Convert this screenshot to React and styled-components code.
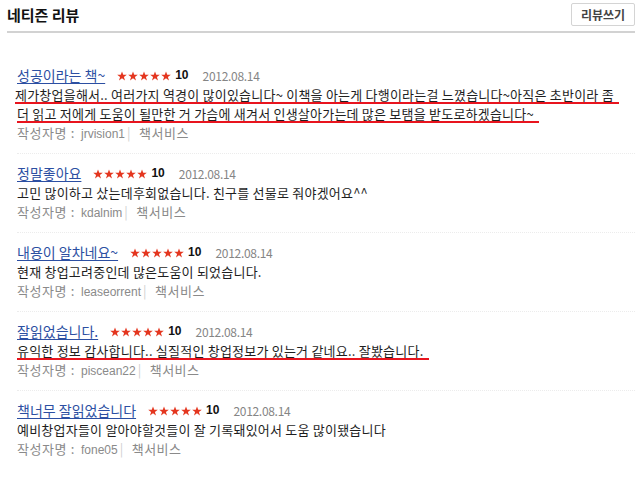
import React from 'react'
import styled, { createGlobalStyle } from 'styled-components'

const GlobalStyle = createGlobalStyle`
  html, body {
    margin: 0;
    padding: 0;
    background: #fff;
  }
  body {
    font-family: "Noto Sans CJK KR", "Noto Sans", sans-serif;
    color: #222;
  }
`

const Page = styled.div`
  width: 640px;
  height: 480px;
  overflow: hidden;
  box-sizing: border-box;
  padding: 0 5px 0 7px;
`

const Header = styled.div`
  display: flex;
  align-items: center;
  justify-content: space-between;
  height: 29px;
  padding-bottom: 2px;
  border-bottom: 2px solid #d2d2d2;
`

const Title = styled.h2`
  margin: 0;
  font-size: 15px;
  font-weight: 700;
  color: #111;
`

const WriteButton = styled.button`
  height: 23px;
  width: 64px;
  padding: 0;
  border: 1px solid #d4d4d4;
  border-radius: 2px;
  background: #fff;
  font-family: inherit;
  font-size: 12px;
  font-weight: 700;
  color: #444;
  cursor: pointer;
`

const List = styled.ul`
  list-style: none;
  margin: 0;
  padding: 23px 0 0 10px;
`

const Review = styled.li`
  padding: 10px 0 11px;
  & + & {
    border-top: 1px dotted #ececec;
  }
`

const Line = styled.div`
  height: 19px;
  line-height: 19px;
  font-size: 13px;
  white-space: nowrap;
`

const Head = styled(Line)`
  display: flex;
  align-items: center;
`

const ReviewTitle = styled.a`
  font-size: 14px;
  color: #2c4fa2;
  text-decoration: underline;
  text-underline-offset: 2px;
  margin-right: 12px;
`

const Stars = styled.span`
  display: inline-flex;
  gap: 1px;
  margin-right: 4px;
`

const Score = styled.b`
  font-family: "Liberation Sans", Arial, sans-serif;
  font-size: 12px;
  color: #111;
  margin-right: 14px;
`

const DateText = styled.span`
  font-size: 12px;
  color: #858585;
  letter-spacing: -0.3px;
`

const Body = styled(Line)`
  color: #1e1e1e;
  letter-spacing: 0.22px;
`

const Marked = styled.span`
  display: inline-block;
  height: 19px;
  padding-right: 5px;
  margin-left: ${p => p.$shift || 0}px;
  background: linear-gradient(#e8141e, #e8141e) no-repeat left bottom / 100% 2px;
`

const Author = styled(Line)`
  color: #8a8a8a;
  letter-spacing: 0.5px;
`

const Colon = styled.span`
  margin: 0 6px 0 4px;
`

const UserId = styled.span`
  font-family: "Liberation Sans", Arial, sans-serif;
  font-size: 12px;
  letter-spacing: 0;
`

const Bar = styled.span`
  color: #d0d0d0;
  margin: 0 8px 0 2px;
`

function Star() {
  return (
    <svg width="10" height="10" viewBox="0 0 24 24">
      <polygon
        fill="#e4361f"
        points="12,1 15,9 23.5,9 16.6,14.2 19.2,22.6 12,17.5 4.8,22.6 7.4,14.2 0.5,9 9,9"
      />
    </svg>
  )
}

const reviews = [
  {
    title: '성공이라는 책~',
    body: [
      '제가창업을해서.. 여러가지 역경이 많이있습니다~ 이책을 아는게 다행이라는걸 느꼈습니다~아직은 초반이라 좀',
      '더 읽고 저에게 도움이 될만한 거 가슴에 새겨서 인생살아가는데 많은 보탬을 받도로하겠습니다~',
    ],
    marked: true,
    user: 'jrvision1',
  },
  {
    title: '정말좋아요',
    body: ['고민 많이하고 샀는데후회없습니다. 친구를 선물로 줘야겠어요^^'],
    user: 'kdalnim',
  },
  {
    title: '내용이 알차네요~',
    body: ['현재 창업고려중인데 많은도움이 되었습니다.'],
    user: 'leaseorrent',
  },
  {
    title: '잘읽었습니다.',
    body: ['유익한 정보 감사합니다.. 실질적인 창업정보가 있는거 같네요.. 잘봤습니다.'],
    marked: true,
    user: 'piscean22',
  },
  {
    title: '책너무 잘읽었습니다',
    body: ['예비창업자들이 알아야할것들이 잘 기록돼있어서 도움 많이됐습니다'],
    user: 'fone05',
  },
]

function App() {
  return (
    <Page>
      <GlobalStyle />
      <Header>
        <Title>네티즌 리뷰</Title>
        <WriteButton>리뷰쓰기</WriteButton>
      </Header>
      <List>
        {reviews.map(r => (
          <Review key={r.user}>
            <Head>
              <ReviewTitle href="#">{r.title}</ReviewTitle>
              <Stars>
                {[0, 1, 2, 3, 4].map(i => <Star key={i} />)}
              </Stars>
              <Score>10</Score>
              <DateText>2012.08.14</DateText>
            </Head>
            {r.body.map((text, i) => (
              <Body key={i}>
                {r.marked
                  ? <Marked $shift={i === 0 && r.body.length > 1 ? -2 : 0}>{text}</Marked>
                  : text}
              </Body>
            ))}
            <Author>
              작성자명<Colon>:</Colon><UserId>{r.user}</UserId><Bar>|</Bar>책서비스
            </Author>
          </Review>
        ))}
      </List>
    </Page>
  )
}

export default App
